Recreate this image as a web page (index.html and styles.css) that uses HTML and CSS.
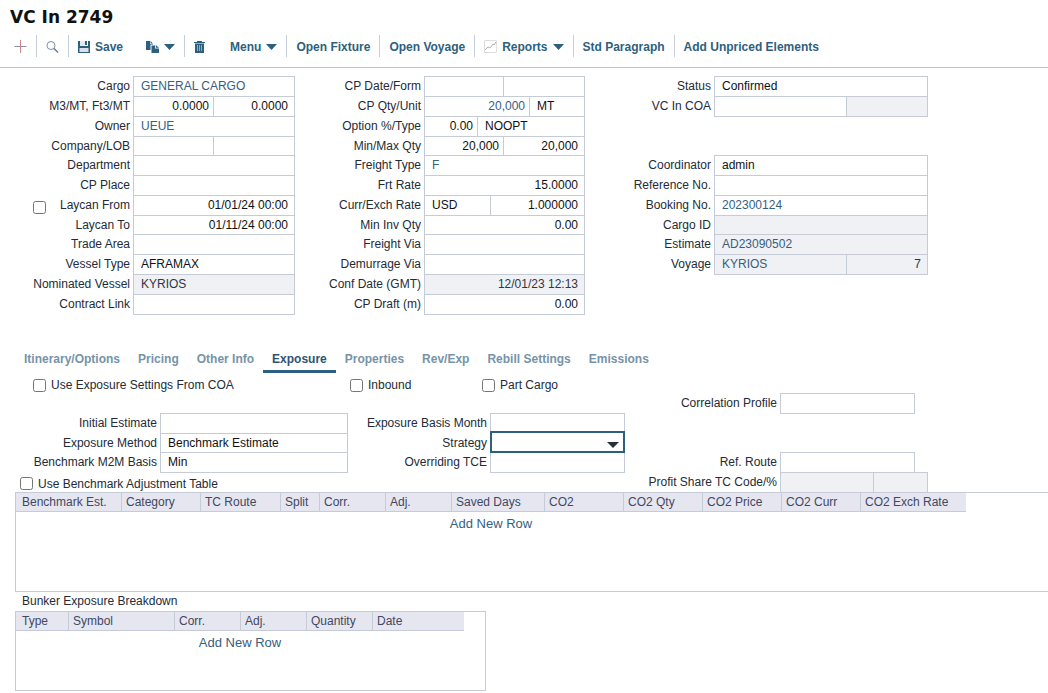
FILE: index.html
```html
<!DOCTYPE html>
<html lang="en">
<head>
<meta charset="utf-8">
<title>VC In 2749</title>
<link rel="stylesheet" href="styles.css">
</head>
<body>
<header class="header">
  <h1 class="title">VC In 2749</h1>
  <nav class="toolbar" aria-label="Actions">
    <button class="tool" aria-label="New"><svg width="13" height="14" viewBox="0 0 13 14"><path d="M0.500 6.500h12" stroke="#8a90a4"/><path d="M6.500 0v13" stroke="#c9868b"/></svg></button>
    <button class="tool" aria-label="Search"><svg width="13" height="14" viewBox="0 0 13 14" fill="none"><circle cx="5" cy="5.500" r="4" stroke="#7c90a8"/><path d="M8 8.500l4 4" stroke="#66758d" stroke-width="1.500"/></svg></button>
    <div class="tool-group">
      <button class="tool tool-save"><svg width="12" height="12" viewBox="0 0 12 12"><path d="M0 0h2v5h8V0h2v12H0z" fill="#2d5f7e"/><path d="M2 0h5v5H2z" fill="#e4eaf0"/><path d="M7 0h2v4H7z" fill="#2d5f7e"/><path d="M1.500 7h9v4h-9z" fill="#dcdfe9"/></svg>Save</button>
      <button class="tool" aria-label="Copy"><svg width="13" height="12" viewBox="0 0 13 12" fill="#2d5f7e"><path d="M0 0h4v3h3v0.500H4.500V9H0z"/><path d="M4.500 0L7 2.500H4.500z"/><path d="M5.500 4.500h3.500v3h4V12H5.500z"/><path d="M9.800 4L13 6.800H9.800z"/></svg><svg class="caret" width="11" height="6" viewBox="0 0 11 6"><path d="M0 0h11L5.500 6z"/></svg></button>
    </div>
    <div class="tool-group">
      <button class="tool tool-trash" aria-label="Delete"><svg width="11" height="12" viewBox="0 0 11 12"><path d="M0 1h3V0h5v1h3v1H0z" fill="#2d5f7e"/><path d="M1 2.500h9V12H1z" fill="#2d5f7e"/><path d="M3.500 4v6M5.500 4v6M7.500 4v6" stroke="#8fafc1"/></svg></button>
      <button class="tool">Menu<svg class="caret" width="11" height="6" viewBox="0 0 11 6"><path d="M0 0h11L5.500 6z"/></svg></button>
    </div>
    <button class="tool">Open Fixture</button>
    <button class="tool">Open Voyage</button>
    <button class="tool">
      <svg width="13" height="13" viewBox="0 0 13 13" fill="none"><path d="M.5.5h12v12H.5z" stroke="#dedede"/><path d="M1 10l3-3 2 1 3-4 1 1 2-3" stroke="#b7aeb9"/></svg>Reports<svg class="caret" width="11" height="6" viewBox="0 0 11 6"><path d="M0 0h11L5.500 6z"/></svg></button>
    <button class="tool">Std Paragraph</button>
    <button class="tool">Add Unpriced Elements</button>
  </nav>
</header>

<main>
  <form class="details">
    <div class="rows">
      <label for="cargo">Cargo</label><input id="cargo" class="link" value="GENERAL CARGO">
      <label for="m3">M3/MT, Ft3/MT</label><div class="split half"><input id="m3" class="num" value="0.0000"><input class="num" aria-label="Ft3/MT" value="0.0000"></div>
      <label for="owner">Owner</label><input id="owner" class="link" value="UEUE">
      <label for="company">Company/LOB</label><div class="split half"><input id="company"><input aria-label="LOB"></div>
      <label for="dept">Department</label><input id="dept">
      <label for="place">CP Place</label><input id="place">
      <div class="check-label"><input type="checkbox" aria-label="Apply laycan"><label for="from">Laycan From</label></div><input id="from" class="num" value="01/01/24 00:00">
      <label for="to">Laycan To</label><input id="to" class="num" value="01/11/24 00:00">
      <label for="area">Trade Area</label><input id="area">
      <label for="vtype">Vessel Type</label><input id="vtype" value="AFRAMAX">
      <label for="vessel">Nominated Vessel</label><input id="vessel" value="KYRIOS" readonly>
      <label for="contract">Contract Link</label><input id="contract">
    </div>
    <div class="rows rows-freight">
      <label for="cpdate">CP Date/Form</label><div class="split half"><input id="cpdate"><input aria-label="CP Form"></div>
      <label for="qty">CP Qty/Unit</label><div class="split wide"><input id="qty" class="num link" value="20,000"><input aria-label="Unit" value="MT"></div>
      <label for="option">Option %/Type</label><div class="split narrow"><input id="option" class="num" value="0.00"><input aria-label="Option type" value="NOOPT"></div>
      <label for="min">Min/Max Qty</label><div class="split half"><input id="min" class="num" value="20,000"><input class="num" aria-label="Max Qty" value="20,000"></div>
      <label for="ftype">Freight Type</label><input id="ftype" class="link" value="F">
      <label for="rate">Frt Rate</label><input id="rate" class="num" value="15.0000">
      <label for="curr">Curr/Exch Rate</label><div class="split currency"><input id="curr" value="USD"><input class="num" aria-label="Exchange rate" value="1.000000"></div>
      <label for="inv">Min Inv Qty</label><input id="inv" class="num" value="0.00">
      <label for="fvia">Freight Via</label><input id="fvia">
      <label for="dvia">Demurrage Via</label><input id="dvia">
      <label for="conf">Conf Date (GMT)</label><input id="conf" class="num" value="12/01/23 12:13" readonly>
      <label for="draft">CP Draft (m)</label><input id="draft" class="num" value="0.00">
    </div>
    <div class="rows rows-status">
      <label for="status">Status</label><input id="status" value="Confirmed">
      <label for="coa">VC In COA</label><div class="split main"><input id="coa"><input aria-label="COA number" readonly></div>
      <div class="gap"></div>
      <label for="coord">Coordinator</label><input id="coord" value="admin">
      <label for="ref">Reference No.</label><input id="ref">
      <label for="booking">Booking No.</label><input id="booking" class="link" value="202300124">
      <label for="cargoid">Cargo ID</label><input id="cargoid" readonly>
      <label for="estimate">Estimate</label><input id="estimate" class="link" value="AD23090502" readonly>
      <label for="voyage">Voyage</label><div class="split main"><input id="voyage" class="link" value="KYRIOS" readonly><input class="num" aria-label="Voyage number" value="7" readonly></div>
    </div>
  </form>

  <nav class="tabs" aria-label="Sections">
    <a href="#itinerary">Itinerary/Options</a>
    <a href="#pricing">Pricing</a>
    <a href="#other">Other Info</a>
    <a href="#exposure" class="active" aria-current="page">Exposure</a>
    <a href="#properties">Properties</a>
    <a href="#revexp">Rev/Exp</a>
    <a href="#rebill">Rebill Settings</a>
    <a href="#emissions">Emissions</a>
  </nav>

  <section class="exposure" id="exposure">
    <div class="checks">
      <label class="check"><input type="checkbox">Use Exposure Settings From COA</label>
      <label class="check"><input type="checkbox">Inbound</label>
      <label class="check"><input type="checkbox">Part Cargo</label>
    </div>
    <form class="exposure-form">
      <label class="col-third" for="corr">Correlation Profile</label><input class="short" id="corr">
      <label for="initial">Initial Estimate</label><input id="initial">
      <label for="month">Exposure Basis Month</label><input id="month">
      <label class="col-first" for="method">Exposure Method</label><input id="method" value="Benchmark Estimate">
      <label for="strategy">Strategy</label>
      <div class="select-box"><select id="strategy"><option></option></select><svg class="select-arrow" width="12" height="6" viewBox="0 0 12 6"><path d="M0 0h12L6 6z" fill="#27303a"/></svg></div>
      <label class="col-first" for="basis">Benchmark M2M Basis</label><input id="basis" value="Min">
      <label for="tce">Overriding TCE</label><input id="tce">
      <label for="route">Ref. Route</label><input class="short" id="route">
      <label class="check check-table"><input type="checkbox">Use Benchmark Adjustment Table</label>
      <label class="col-third" for="profit">Profit Share TC Code/%</label><div class="split profit"><input id="profit" readonly><input aria-label="Profit share percent" readonly></div>
    </form>

    <div class="panel panel-wide">
      <table class="grid grid-benchmark">
        <colgroup><col class="w106"><col class="w79"><col class="w80"><col class="w39"><col class="w66"><col class="w66"><col class="w93"><col class="w79"><col class="w79"><col class="w79"><col class="w79"><col class="w105"></colgroup>
        <thead><tr><th>Benchmark Est.</th><th>Category</th><th>TC Route</th><th>Split</th><th>Corr.</th><th>Adj.</th><th>Saved Days</th><th>CO2</th><th>CO2 Qty</th><th>CO2 Price</th><th>CO2 Curr</th><th>CO2 Exch Rate</th></tr></thead>
        <tbody><tr><td colspan="12"><button class="add">Add New Row</button></td></tr></tbody>
      </table>
    </div>

    <h2 class="subtitle">Bunker Exposure Breakdown</h2>
    <div class="panel panel-bunker">
      <table class="grid grid-bunker">
        <colgroup><col class="w53"><col class="w106"><col class="w66"><col class="w66"><col class="w66"><col class="w91"></colgroup>
        <thead><tr><th>Type</th><th>Symbol</th><th>Corr.</th><th>Adj.</th><th>Quantity</th><th>Date</th></tr></thead>
        <tbody><tr><td colspan="6"><button class="add">Add New Row</button></td></tr></tbody>
      </table>
    </div>
  </section>
</main>
</body>
</html>
```
FILE: styles.css
```css
* { box-sizing: border-box; }

body {
  margin: 0;
  background: #fff;
  color: #232b37;
  font: 12px/20px "Liberation Sans", Arial, sans-serif;
}

button, input, select { font: inherit; }
input[type="checkbox"] { width: 13px; height: 13px; margin: 0; flex: none; }

/* Header */
.header { border-bottom: 1px solid #bcc4cf; }
.title {
  margin: 0;
  padding: 6px 10px 5px;
  color: #111;
  font: bold 17px/22px "DejaVu Sans", sans-serif;
}
.toolbar { display: flex; align-items: center; padding: 2px 5px 10px; }
.tool-group { display: flex; }
.tool {
  display: flex;
  align-items: center;
  gap: 5px;
  height: 22px;
  padding: 1px 9px 0;
  border: 0;
  background: none;
  color: #2d5f7e;
  font-weight: bold;
  white-space: nowrap;
}
.toolbar > * + * { border-left: 1px solid #c8ced9; }
.tool-save { margin-right: 5px; }
.tool-trash { margin-right: 7px; }
.caret { fill: #2d5f7e; }

/* Upper form */
.details { display: flex; padding-top: 8px; }
.rows {
  display: grid;
  flex: 0 1 auto;
  grid-template-columns: 130px minmax(80px, 162px);
  grid-template-rows: repeat(2, 20px 20px 20px 19px);
  grid-auto-rows: 20px;
  column-gap: 3px;
}
.rows-freight { grid-template-columns: 126px minmax(80px, 161px); }
.rows-status { grid-template-columns: 126px minmax(80px, 214px); }
.rows label, .exposure-form > label { text-align: right; white-space: nowrap; }
.gap { grid-column: 1 / -1; grid-row: span 2; }

.details input:not([type="checkbox"]), .exposure-form input:not([type="checkbox"]) {
  width: 100%;
  min-width: 0;
  height: 21px;
  padding: 0 6px 2px 7px;
  border: 1px solid #c5ccd7;
  border-radius: 0;
  background: #fff;
  color: #111;
}
.details input[readonly], .exposure-form input[readonly] { background: #f0f1f4; color: #303642; }
.details input.link { color: #35607f; }
.num { text-align: right; }

.split { display: flex; }
.split input + input { flex: 1; margin-left: -1px; }
.details .split input:first-child { flex: none; padding-right: 4px; }
.exposure-form .split input:first-child { flex: none; }
.details .half input:first-child { width: 81px; }
.details .rows-freight .half input:first-child { width: 80px; }
.details .wide input:first-child { width: 106px; }
.details .narrow input:first-child { width: 54px; }
.details .currency input:first-child { width: 67px; }
.details .main input:first-child { width: 133px; }
.exposure-form .profit input:first-child { width: 94px; }

.check-label { display: flex; justify-content: space-between; padding-left: 33px; }
.check-label input { align-self: flex-end; margin-bottom: 1px; }

/* Tabs */
.tabs { display: flex; margin-top: 35px; padding-left: 15px; }
.tabs a {
  padding: 0 9px 1px;
  border-bottom: 3px solid transparent;
  color: #7793a8;
  font-weight: bold;
  text-decoration: none;
  white-space: nowrap;
}
.tabs .active { border-color: #2d5f7e; color: #2d5472; }

/* Exposure section */
.checks {
  display: grid;
  grid-template-columns: 317px 132px auto;
  padding: 2px 0 0 33px;
  margin-bottom: -2px;
}
.check { display: flex; align-items: center; gap: 5px; }
.exposure-form {
  display: grid;
  grid-template-columns: 157px minmax(80px, 188px) 136px minmax(80px, 135px) 149px minmax(80px, 148px);
  grid-template-rows: 20px 20px 19px 20px 20px;
  column-gap: 3px;
}
.col-first { grid-column: 1; }
.col-third { grid-column: 5; }
.exposure-form > .short { max-width: 135px; }
.exposure-form > .check-table { grid-column: 1 / span 3; padding: 3px 0 0 20px; }

.select-box { position: relative; z-index: 1; height: 23px; margin-top: -2px; }
.select-box select {
  width: 100%;
  height: 22px;
  padding: 0 6px;
  border: 2px solid #2d5f7e;
  border-radius: 0;
  background: #fff;
  appearance: none;
  display: block;
}
.select-arrow { position: absolute; right: 6px; top: 11px; pointer-events: none; }

/* Data grids */
.panel { margin-left: 15px; border: 1px solid #c5ccd7; }
.panel-wide { position: relative; min-height: 100px; border-right: 0; }
.panel-bunker { max-width: 471px; min-height: 80px; }
.subtitle { margin: 0; padding: 0 0 0 22px; font-size: 12px; font-weight: normal; line-height: 19px; }
.grid { table-layout: fixed; border-collapse: separate; border-spacing: 0; }
.grid-benchmark { width: 950px; }
.grid-bunker { width: 448px; }
.grid th {
  height: 19px;
  padding: 0 0 0 4px;
  border-right: 1px solid #c5ccd7;
  border-bottom: 1px solid #c5ccd7;
  background: #e6e6f0;
  color: #41485f;
  font-weight: normal;
  line-height: 18px;
  text-align: left;
  white-space: nowrap;
}
.grid th:first-child { padding-left: 6px; }
.grid th:last-child { border-right: 0; }
.grid td { padding: 2px 0 0; text-align: center; }
.add { padding: 0; border: 0; background: none; color: #35607f; font-size: 13px; line-height: 20px; }
.w39 { width: 39px; }
.w53 { width: 53px; }
.w66 { width: 66px; }
.w79 { width: 79px; }
.w80 { width: 80px; }
.w91 { width: 91px; }
.w93 { width: 93px; }
.w105 { width: 105px; }
.w106 { width: 106px; }
```
